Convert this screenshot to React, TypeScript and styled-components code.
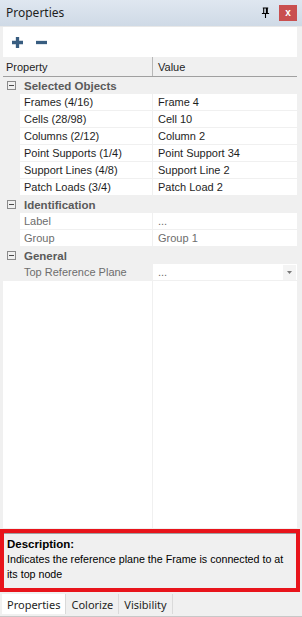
import React from "react"
import styled, { createGlobalStyle } from "styled-components"

const GlobalStyle = createGlobalStyle`
  html, body {
    margin: 0;
    padding: 0;
    background: #f0f0f0;
  }
  * { box-sizing: border-box; }
`

type Row =
  | { kind: "cat"; label: string }
  | { kind: "prop"; label: string; value: string; dim?: boolean; dropdown?: boolean }

const rows: Row[] = [
  { kind: "cat", label: "Selected Objects" },
  { kind: "prop", label: "Frames (4/16)", value: "Frame 4" },
  { kind: "prop", label: "Cells (28/98)", value: "Cell 10" },
  { kind: "prop", label: "Columns (2/12)", value: "Column 2" },
  { kind: "prop", label: "Point Supports (1/4)", value: "Point Support 34" },
  { kind: "prop", label: "Support Lines (4/8)", value: "Support Line 2" },
  { kind: "prop", label: "Patch Loads (3/4)", value: "Patch Load 2" },
  { kind: "cat", label: "Identification" },
  { kind: "prop", label: "Label", value: "...", dim: true },
  { kind: "prop", label: "Group", value: "Group 1", dim: true },
  { kind: "cat", label: "General" },
  { kind: "prop", label: "Top Reference Plane", value: "...", dim: true, dropdown: true },
]

const tabs = ["Properties", "Colorize", "Visibility"]

export default function App() {
  return (
    <>
      <GlobalStyle />
      <Window>
        <TitleBar>
          <Title>Properties</Title>
          <TitleButtons>
            <PinIcon viewBox="0 0 10 12">
              <path d="M2 0.5h6M3 0.5v6M7 0.5v6M6 0.5v6M1 6.5h8M5 6.5v5" stroke="#000" strokeWidth="1.2" fill="none" />
            </PinIcon>
            <CloseButton>x</CloseButton>
          </TitleButtons>
        </TitleBar>

        <Panel>
          <Toolbar>
            <ToolIcon viewBox="0 0 12 12">
              <path d="M6 0v12M0 6h12" stroke="#385d80" strokeWidth="3.6" />
            </ToolIcon>
            <ToolIcon viewBox="0 0 12 12">
              <path d="M0 6h12" stroke="#385d80" strokeWidth="3.6" />
            </ToolIcon>
          </Toolbar>

          <Grid>
            <HeaderRow>
              <HeaderCell>Property</HeaderCell>
              <HeaderCell $value>Value</HeaderCell>
            </HeaderRow>

            {rows.map((r, i) =>
              r.kind === "cat" ? (
                <CatRow key={i}>
                  <Gutter>
                    <ExpandBox />
                  </Gutter>
                  <CatLabel>{r.label}</CatLabel>
                </CatRow>
              ) : (
                <PropRow key={i}>
                  <Gutter />
                  <NameCell $dim={r.dim} $shaded={r.dropdown}>{r.label}</NameCell>
                  <ValueCell $dim={r.dim}>
                    <span>{r.value}</span>
                    {r.dropdown && (
                      <DropButton>
                        <svg width="5" height="3" viewBox="0 0 5 3">
                          <path d="M0 0h5L2.5 3z" fill="#7a7a7a" />
                        </svg>
                      </DropButton>
                    )}
                  </ValueCell>
                </PropRow>
              )
            )}

            <Filler>
              <FillerLeft />
              <FillerRight />
            </Filler>
          </Grid>
        </Panel>

        <Description>
          <DescInner>
            <DescTitle>Description:</DescTitle>
            <DescText>Indicates the reference plane the Frame is connected to at its top node</DescText>
          </DescInner>
        </Description>

        <TabBar>
          {tabs.map((t, i) => (
            <Tab key={t} $active={i === 0}>{t}</Tab>
          ))}
        </TabBar>
      </Window>
    </>
  )
}

const Window = styled.div`
  width: 302px;
  height: 617px;
  display: flex;
  flex-direction: column;
  background: #f0f0f0;
  font-family: "Liberation Sans", Arial, sans-serif;
  font-size: 11px;
  color: #1e1e1e;
  overflow: hidden;
`
const TitleBar = styled.div`
  height: 27px;
  flex: none;
  display: flex;
  align-items: center;
  justify-content: space-between;
  padding: 0 5px 0 6px;
  background: linear-gradient(#dfe7f0, #cfdae6);
  border-bottom: 1px solid #e8e8e8;
`
const Title = styled.div`
  font-family: "Noto Sans", sans-serif;
  font-size: 12px;
  color: #1e1e1e;
  margin-top: -1px;
`
const TitleButtons = styled.div`
  display: flex;
  align-items: center;
  gap: 9px;
`
const PinIcon = styled.svg`
  width: 9px;
  height: 12px;
`
const CloseButton = styled.div`
  width: 18px;
  height: 16px;
  background: #c94f4f;
  color: #fff;
  font-family: "Liberation Sans", sans-serif;
  font-weight: bold;
  font-size: 10px;
  display: flex;
  align-items: center;
  justify-content: center;
  padding-bottom: 2px;
`
const Panel = styled.div`
  flex: 1;
  min-height: 0;
  display: flex;
  flex-direction: column;
  margin: 0 5px 0 3px;
  background: #fff;
`
const Toolbar = styled.div`
  height: 30px;
  flex: none;
  display: flex;
  align-items: center;
  gap: 13px;
  padding: 0 0 0 9px;
`
const ToolIcon = styled.svg`
  width: 11px;
  height: 11px;
`
const Grid = styled.div`
  flex: 1;
  display: flex;
  flex-direction: column;
`
const HeaderRow = styled.div`
  height: 20px;
  flex: none;
  display: grid;
  grid-template-columns: 149px 1fr;
  background: #f0f0f0;
  border-bottom: 1px solid #a0a0a0;
`
const HeaderCell = styled.div<{ $value?: boolean }>`
  display: flex;
  align-items: center;
  padding-left: ${(p) => (p.$value ? "5px" : "3px")};
  border-left: ${(p) => (p.$value ? "1px solid #b8b8b8" : "none")};
  font-size: 11px;
`
const CatRow = styled.div`
  height: 17px;
  flex: none;
  display: flex;
  align-items: center;
  background: #f0f0f0;
`
const Gutter = styled.div`
  width: 17px;
  height: 100%;
  flex: none;
  background: #f0f0f0;
  display: flex;
  align-items: center;
  justify-content: center;
`
const ExpandBox = styled.div`
  width: 9px;
  height: 9px;
  border: 1px solid #8a8a8a;
  position: relative;
  &::after {
    content: "";
    position: absolute;
    left: 1px;
    right: 1px;
    top: 3px;
    height: 1px;
    background: #4a4a4a;
  }
`
const CatLabel = styled.div`
  font-weight: bold;
  font-size: 11.5px;
  color: #5a5a5a;
  padding-left: 4px;
`
const PropRow = styled.div`
  height: 17px;
  flex: none;
  display: flex;
  border-bottom: 1px solid #f0f0f0;
`
const NameCell = styled.div<{ $dim?: boolean; $shaded?: boolean }>`
  width: 132px;
  flex: none;
  display: flex;
  align-items: center;
  padding-left: 4px;
  white-space: nowrap;
  color: ${(p) => (p.$dim ? "#6d6d6d" : "#1e1e1e")};
  background: ${(p) => (p.$shaded ? "#f0f0f0" : "#fff")};
  font-size: 11px;
`
const ValueCell = styled.div<{ $dim?: boolean }>`
  flex: 1;
  display: flex;
  align-items: center;
  justify-content: space-between;
  padding-left: 5px;
  border-left: 1px solid #f0f0f0;
  color: ${(p) => (p.$dim ? "#6d6d6d" : "#1e1e1e")};
  font-size: 11px;
  white-space: nowrap;
`
const DropButton = styled.div`
  width: 13px;
  height: 15px;
  display: flex;
  align-items: center;
  justify-content: center;
  background: #f4f4f4;
  margin-right: 1px;
`
const Filler = styled.div`
  flex: 1;
  display: flex;
`
const FillerLeft = styled.div`
  width: 149px;
  flex: none;
`
const FillerRight = styled.div`
  flex: 1;
  border-left: 1px solid #f0f0f0;
`
const Description = styled.div`
  flex: none;
  height: 63px;
  margin: 1px 2px 0 0;
  border: 4px solid #e8141b;
  background: #f0f0f0;
`
const DescInner = styled.div`
  height: 100%;
  border-top: 1px solid #a0a0a0;
  padding: 3px 0 0 3px;
`
const DescTitle = styled.div`
  font-weight: bold;
  font-size: 11.5px;
  color: #000;
  line-height: 15px;
`
const DescText = styled.div`
  font-size: 10.7px;
  line-height: 15px;
  color: #000;
`
const TabBar = styled.div`
  flex: none;
  height: 25px;
  display: flex;
  align-items: flex-start;
  padding: 2px 0 0 2px;
  border-bottom: 1px solid #c8c8c8;
`
const Tab = styled.div<{ $active?: boolean }>`
  height: 20px;
  display: flex;
  align-items: center;
  padding: 0 5px;
  font-family: "Noto Sans", sans-serif;
  font-size: 11px;
  background: ${(p) => (p.$active ? "#fff" : "#f0f0f0")};
  border-right: 1px solid #dadada;
  color: #1e1e1e;
`
